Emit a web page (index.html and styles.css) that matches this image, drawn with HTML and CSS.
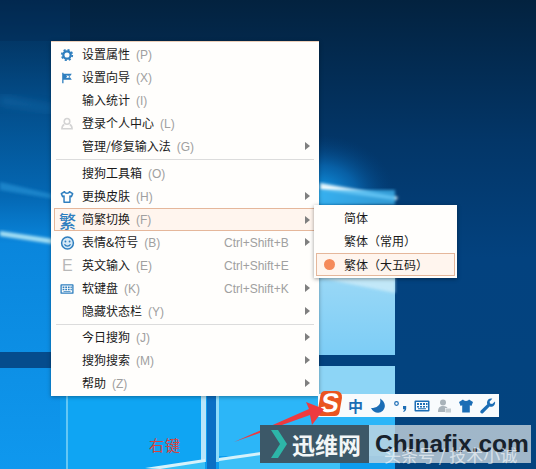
FILE: index.html
```html
<!DOCTYPE html>
<html lang="zh-CN">

<head>
  <meta charset="UTF-8" />
  <title>搜狗输入法菜单</title>
  <link rel="stylesheet" href="styles.css">
</head>

<body>
  <div class="desktop">
    <!-- Wallpaper -->
    <svg class="wallpaper" width="536" height="469" viewBox="0 0 536 469">
      <defs>
        <linearGradient id="rightBg" x1="0" y1="0" x2="0" y2="1">
          <stop offset="0" stop-color="#03223f" />
          <stop offset="0.3" stop-color="#033668" />
          <stop offset="0.55" stop-color="#03427f" />
          <stop offset="1" stop-color="#03447f" />
        </linearGradient>
        <linearGradient id="leftBg" x1="0" y1="0" x2="0" y2="1">
          <stop offset="0" stop-color="#02294f" />
          <stop offset="0.2" stop-color="#034a85" />
          <stop offset="0.42" stop-color="#0468b4" />
          <stop offset="0.52" stop-color="#0a86dc" />
          <stop offset="1" stop-color="#0f98ee" />
        </linearGradient>
        <linearGradient id="paneBg" x1="0" y1="0" x2="0" y2="1">
          <stop offset="0" stop-color="#9ad8f6" />
          <stop offset="1" stop-color="#7ccdf6" />
        </linearGradient>
        <radialGradient id="glow">
          <stop offset="0" stop-color="#12a0f0" />
          <stop offset="0.5" stop-color="#0a70bd" stop-opacity="0.7" />
          <stop offset="1" stop-color="#03427f" stop-opacity="0" />
        </radialGradient>
        <filter id="soft"><feGaussianBlur stdDeviation="1.5" /></filter>
        <filter id="softer"><feGaussianBlur stdDeviation="4" /></filter>
      </defs>
      <rect width="536" height="469" fill="url(#rightBg)" />
      <rect width="70" height="469" fill="url(#leftBg)" />
      <rect width="70" height="41" fill="#02294f" opacity="0.35" />
      <ellipse cx="320" cy="195" rx="75" ry="60" fill="url(#glow)" />
      <!-- left beams -->
      <polygon points="0,96 60,108 60,112 0,104" fill="#1a77b8" opacity="0.5" filter="url(#softer)" />
      <polygon points="0,182 60,196 60,200 0,190" fill="#2a97da" opacity="0.6" filter="url(#soft)" />
      <polygon points="0,231 60,240 60,245 0,236" fill="#a5e0f5" filter="url(#soft)" />
      <rect y="352" width="60" height="16" fill="#054c8d" />
      <!-- lower panes -->
      <rect x="60" y="396" width="335" height="73" fill="#0c9cee" />
      <rect x="66" y="396" width="2" height="73" fill="#63c8f5" />
      <rect x="68" y="396" width="133" height="73" fill="#0fa5f3" />
      <rect x="201" y="396" width="5" height="66" fill="#b8e6fa" />
      <rect x="207" y="396" width="9" height="73" fill="#0a6fc4" />
      <rect x="216" y="396" width="3" height="66" fill="#8fdcfa" />
      <rect x="219" y="396" width="176" height="60" fill="#2cb6f8" />
      <polygon points="145,469 205,460 205,469" fill="#38c0f6" />
      <polygon points="219,469 219,458 340,440 340,469" fill="#3cc0f8" />
      <polygon points="145,468 205,459 205,462 160,469" fill="#d6f2fb" />
      <polygon points="219,458 340,441 340,444 219,461" fill="#d6f2fb" />
      <rect x="318" y="277" width="77" height="78" fill="url(#paneBg)" />
      <polygon points="318,277 395,277 395,293 340,282" fill="#d5f0fa" opacity="0.7" filter="url(#soft)" />
      <rect x="318" y="366" width="77" height="30" fill="#8dd5f6" />
      <polygon points="320,183 398,197 396,200 320,190" fill="#e6f7fd" filter="url(#soft)" />
      <rect x="318" y="190" width="77" height="15" fill="#3fb5f0" opacity="0.8" filter="url(#soft)" />
    </svg>

    <!-- Shared icons -->
    <svg class="sprites" width="0" height="0">
      <symbol id="i-shirt" viewBox="0 0 16 16">
        <path d="M5 1.5 L1 4 L2.6 8 L4.2 7.2 V14.5 H11.8 V7.2 L13.4 8 L15 4 L11 1.5 C10.4 3.4 5.6 3.4 5 1.5 Z" />
      </symbol>
      <symbol id="i-shirt-line" viewBox="0 0 16 16">
        <path fill="none" stroke="#2f7fbf" stroke-width="1.7" stroke-linejoin="round" d="M5.2 2 L1.5 4.2 L3 7.6 L4.6 6.8 V14 H11.4 V6.8 L13 7.6 L14.5 4.2 L10.8 2 C10.2 4.2 5.8 4.2 5.2 2 Z" />
      </symbol>
      <symbol id="i-keyboard" viewBox="0 0 16 12">
        <path fill-rule="evenodd" d="M1.5 0.5 H14.5 A1 1 0 0 1 15.5 1.5 V10.5 A1 1 0 0 1 14.5 11.5 H1.5 A1 1 0 0 1 0.5 10.5 V1.5 A1 1 0 0 1 1.5 0.5 Z M2 2 V10 H14 V2 Z" />
        <path d="M3 3h2v2H3z M6 3h2v2H6z M9 3h2v2H9z M12 3h1.5v2H12z M3 6h2v1.5H3z M6 6h2v1.5H6z M9 6h2v1.5H9z M12 6h1.5v1.5H12z M4 8.2h8v1H4z" />
      </symbol>
    </svg>

    <!-- Main menu -->
    <div class="menu">
      <div class="row">
        <svg class="icon" width="14" height="14" viewBox="0 0 16 16">
          <circle cx="8" cy="8" r="4.2" fill="none" stroke="#2f7fbf" stroke-width="2.6" />
          <circle cx="8" cy="8" r="6" fill="none" stroke="#2f7fbf" stroke-width="2" stroke-dasharray="2.4 2.3" />
        </svg>
        <span class="label">设置属性<i>(P)</i></span>
      </div>
      <div class="row">
        <svg class="icon" width="14" height="14" viewBox="0 0 16 16">
          <path fill="#2f7fbf" d="M2.5 2 H4 V14 H2.5 Z M4 3 H13.5 L11 6.5 L13.5 10 H4 Z M7 5 L8.2 6.5 L7 8 H8.5 L9.4 7 L10.2 8 H11 L10 6.5 L11 5 H10 L9.4 6 L8.6 5 Z" fill-rule="evenodd" />
        </svg>
        <span class="label">设置向导<i>(X)</i></span>
      </div>
      <div class="row"><span class="label">输入统计<i>(I)</i></span></div>
      <div class="row">
        <svg class="icon" width="14" height="14" viewBox="0 0 16 16" fill="none" stroke="#d4d4d4" stroke-width="1.8">
          <circle cx="8" cy="5" r="3.2" />
          <path d="M4.8 8.5 C2.8 9.5 2.2 11 2.2 13.5 H13.8 C13.8 11 13.2 9.5 11.2 8.5" />
        </svg>
        <span class="label">登录个人中心<i>(L)</i></span>
      </div>
      <div class="row arrow"><span class="label">管理/修复输入法<i>(G)</i></span></div>
      <div class="sep"></div>
      <div class="row"><span class="label">搜狗工具箱<i>(O)</i></span></div>
      <div class="row arrow">
        <svg class="icon" width="14" height="14"><use href="#i-shirt-line" /></svg>
        <span class="label">更换皮肤<i>(H)</i></span>
      </div>
      <div class="row arrow active">
        <span class="icon fan">繁</span>
        <span class="label">简繁切换<i>(F)</i></span>
      </div>
      <div class="row arrow">
        <svg class="icon" width="15" height="15" viewBox="0 0 16 16">
          <circle cx="8" cy="8" r="6.3" fill="#d5e8f6" stroke="#2f7fbf" stroke-width="1.6" />
          <circle cx="5.8" cy="6.4" r="1" fill="#2f7fbf" />
          <circle cx="10.2" cy="6.4" r="1" fill="#2f7fbf" />
          <path d="M4.8 9.4 C6 12 10 12 11.2 9.4" fill="none" stroke="#2f7fbf" stroke-width="1.3" />
        </svg>
        <span class="label">表情&amp;符号<i>(B)</i></span>
        <span class="keys">Ctrl+Shift+B</span>
      </div>
      <div class="row">
        <span class="icon letter">E</span>
        <span class="label">英文输入<i>(E)</i></span>
        <span class="keys">Ctrl+Shift+E</span>
      </div>
      <div class="row arrow">
        <svg class="icon icon-fill" width="14" height="11"><use href="#i-keyboard" /></svg>
        <span class="label">软键盘<i>(K)</i></span>
        <span class="keys">Ctrl+Shift+K</span>
      </div>
      <div class="row arrow"><span class="label">隐藏状态栏<i>(Y)</i></span></div>
      <div class="sep tight"></div>
      <div class="row arrow"><span class="label">今日搜狗<i>(J)</i></span></div>
      <div class="row arrow"><span class="label">搜狗搜索<i>(M)</i></span></div>
      <div class="row arrow"><span class="label">帮助<i>(Z)</i></span></div>
    </div>

    <!-- Submenu -->
    <div class="submenu">
      <div class="subrow">简体</div>
      <div class="subrow">繁体（常用）</div>
      <div class="subrow current">繁体（大五码）</div>
    </div>

    <!-- Status bar -->
    <div class="statusbar">
      <span class="logo"><b>S</b></span>
      <span class="zh">中</span>
      <svg width="16" height="16" viewBox="0 0 16 16">
        <path fill="#1b6db5" d="M10 0.5 C11.5 6 8 10 1 10 C3 14.5 9 16.5 12.8 12.8 C16.5 9 15 3 10 0.5 Z" />
      </svg>
      <svg width="16" height="16" viewBox="0 0 16 16">
        <circle cx="4.5" cy="5.5" r="1.8" fill="none" stroke="#1b6db5" stroke-width="1.2" />
        <path fill="#1b6db5" d="M11 8 H14.2 V10.5 C14.2 12.5 13 13.6 11.5 14 L11.2 13 C12 12.6 12.5 12 12.5 11.2 H11 Z" />
      </svg>
      <svg class="icon-fill dark" width="16" height="12"><use href="#i-keyboard" /></svg>
      <svg width="16" height="16" viewBox="0 0 16 16">
        <circle cx="7" cy="4.5" r="3" fill="#a9b3ba" />
        <path fill="#a9b3ba" d="M2 14 C2 9.5 4 8 7 8 C10 8 11 9 11.5 10 H9 V14 Z" />
        <rect x="9.5" y="10.5" width="5.5" height="4" fill="#c4ccd1" />
      </svg>
      <svg class="icon-fill dark" width="16" height="16"><use href="#i-shirt" /></svg>
      <svg width="16" height="16" viewBox="0 0 16 16">
        <path fill="#1b6db5" d="M15 3.5 L12.2 6 L10 5.5 L9.6 3.4 L12.3 0.8 C9.8 0 7 1.8 7 4.6 C7 5.3 7.1 5.8 7.3 6.3 L0.8 12.6 C0 13.5 0.2 14.4 0.8 15 C1.5 15.6 2.4 15.6 3.2 14.9 L9.6 8.6 C12.6 9.6 15.8 7 15 3.5 Z" />
      </svg>
    </div>

    <!-- Screenshot notes and watermark -->
    <svg class="pointer" width="100" height="50" viewBox="0 0 100 50">
      <polygon points="1,47 76,14 73,7 91,14 79,30 77,20" fill="#ee3a3f" />
    </svg>
    <span class="note">右键</span>
    <div class="watermark">
      <div class="wm-left">
        <svg width="18" height="30" viewBox="0 0 18 30">
          <polygon points="1,1 8,1 17,15 8,29 1,29 10,15" fill="#2db5a8" />
        </svg>
        <span>迅维网</span>
      </div>
      <div class="wm-right">Chinafix.com<em>头条号 / 技术小诚</em></div>
    </div>
  </div>
</body>

</html>
```

FILE: styles.css
```css
* {
  box-sizing: border-box;
  margin: 0;
  padding: 0;
}

body {
  font-family: "Noto Sans CJK SC", "Liberation Sans", sans-serif;
  background-color: #03427f;
  overflow: hidden;
}

.desktop {
  position: relative;
  width: 536px;
  height: 469px;
  overflow: hidden;
}

.wallpaper {
  position: absolute;
  top: 0;
  left: 0;
}

.sprites {
  position: absolute;
}

/* Main menu */
.menu {
  position: absolute;
  top: 41px;
  left: 51px;
  width: 268px;
  height: 355px;
  padding: 1px 0 0;
  display: flex;
  flex-direction: column;
  background-color: #fffefc;
  border-top: 1px solid #eccfb8;
  box-shadow: 0 1px 4px rgba(0, 0, 0, 0.35);
  font-size: 12px;
  color: #1a1a1a;
}

.row {
  position: relative;
  display: flex;
  align-items: center;
  height: 23px;
  margin: 0 5px 0 3px;
  padding-left: 28px;
  line-height: 1;
}

.row.arrow::after {
  content: "";
  position: absolute;
  right: 4px;
  top: 7px;
  border-left: 5px solid #7f7f7f;
  border-top: 4px solid transparent;
  border-bottom: 4px solid transparent;
}

.row.active {
  margin-right: 4px;
  background-color: #fff5ee;
  border: 1px solid #e5b79b;
  padding-left: 27px;
}

.label i {
  font-style: normal;
  color: #a0a0a0;
  margin-left: 6px;
  font-family: "Liberation Sans", sans-serif;
}

.keys {
  position: absolute;
  left: 170px;
  color: #a0a0a0;
  font-family: "Liberation Sans", sans-serif;
  font-size: 12px;
}

.icon {
  position: absolute;
  left: 6px;
  top: 50%;
  transform: translateY(-50%);
}

.icon-fill {
  fill: #2f7fbf;
}

.icon-fill.dark {
  fill: #1b6db5;
}

.fan {
  left: 4px;
  font-size: 17px;
  font-weight: 500;
  color: #2f7fbf;
}

.letter {
  left: 8px;
  font-family: "Liberation Sans", sans-serif;
  font-size: 16px;
  color: #b8b8b8;
}

.sep {
  height: 1px;
  margin: 1px 5px 2px;
  background-color: #dcdcdc;
}

.sep.tight {
  margin: 1px 5px 1px;
}

/* Submenu */
.submenu {
  position: absolute;
  top: 205px;
  left: 314px;
  width: 143px;
  height: 73px;
  padding: 2px;
  display: flex;
  flex-direction: column;
  background-color: #fffefc;
  box-shadow: 0 1px 4px rgba(0, 0, 0, 0.4);
  font-size: 12px;
  color: #1a1a1a;
}

.subrow {
  height: 23px;
  line-height: 22px;
  padding-left: 28px;
}

.subrow.current {
  position: relative;
  background-color: #fff5ee;
  border: 1px solid #e5b79b;
  padding-left: 27px;
}

.subrow.current::before {
  content: "";
  position: absolute;
  left: 7px;
  top: 5px;
  width: 11px;
  height: 11px;
  border-radius: 50%;
  background-color: #f58a5a;
}

/* Status bar */
.statusbar {
  position: absolute;
  top: 394px;
  left: 318px;
  width: 181px;
  height: 23px;
  display: flex;
  align-items: center;
  gap: 6px;
  padding-left: 30px;
  background-color: #f8fbfd;
}

.logo {
  position: absolute;
  left: 1px;
  top: -3px;
  width: 22px;
  height: 25px;
  border-radius: 4px 7px 4px 4px;
  background-color: #ea5520;
  transform: skewX(-10deg);
  text-align: center;
}

.logo b {
  color: #fff;
  font-family: "Liberation Sans", sans-serif;
  font-size: 27px;
  font-weight: 700;
  line-height: 25px;
}

.zh {
  width: 16px;
  font-size: 15px;
  font-weight: 700;
  line-height: 1;
  color: #1b6db5;
}

/* Notes */
.pointer {
  position: absolute;
  top: 395px;
  left: 233px;
}

.note {
  position: absolute;
  top: 435px;
  left: 149px;
  font-size: 15px;
  line-height: 20px;
  letter-spacing: 1px;
  color: #d8433f;
}

.watermark {
  position: absolute;
  top: 425px;
  left: 260px;
  height: 38px;
  display: flex;
}

.wm-left {
  width: 109px;
  display: flex;
  align-items: center;
  gap: 4px;
  padding-left: 10px;
  background-color: #3c5868;
  color: #f2f6f7;
  font-size: 23px;
  font-weight: 700;
  white-space: nowrap;
}

.wm-right {
  position: relative;
  width: 162px;
  padding-left: 6px;
  background-color: rgba(205, 215, 222, 0.78);
  color: #18222c;
  font-family: "Liberation Sans", sans-serif;
  font-size: 24.5px;
  font-weight: 700;
  line-height: 38px;
  white-space: nowrap;
}

.wm-right em {
  position: absolute;
  left: 15px;
  top: 18px;
  font-family: "Noto Sans CJK SC", sans-serif;
  font-size: 17px;
  font-style: normal;
  font-weight: 400;
  line-height: 24px;
  color: rgba(255, 255, 255, 0.6);
}
```
